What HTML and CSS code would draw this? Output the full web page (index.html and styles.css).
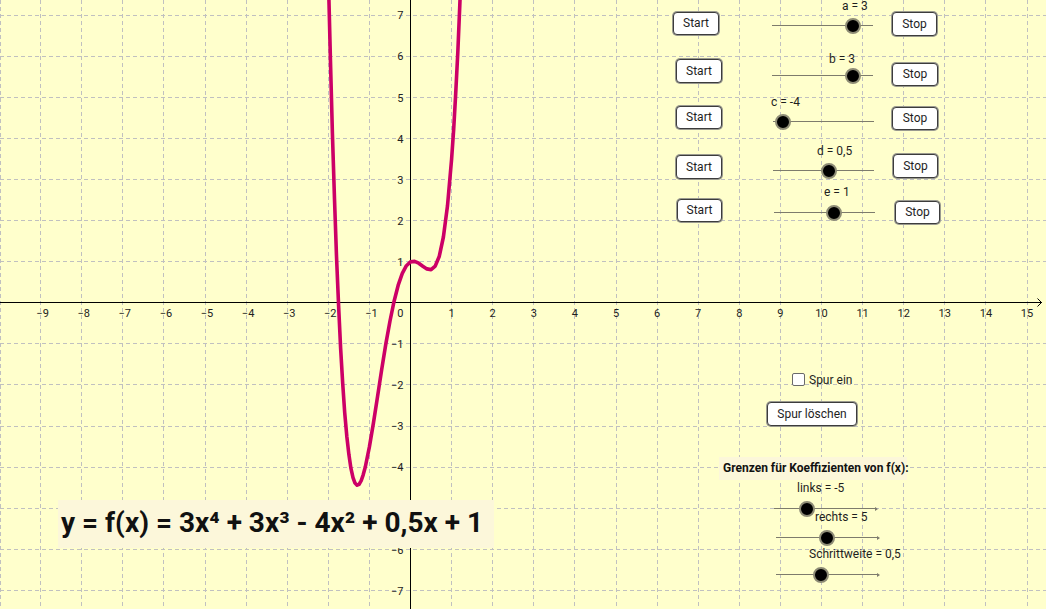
FILE: index.html
```html
<!DOCTYPE html>
<html lang="de">
<head>
<meta charset="utf-8">
<title>Funktion 4. Grades</title>
<link rel="stylesheet" href="styles.css">
</head>
<body>
<div class="applet">
  <svg class="graph" width="1046" height="609" viewBox="0 0 1046 609" xmlns="http://www.w3.org/2000/svg">
    <path class="grid" d="M0.5,0V609 M40.5,0V609 M81.5,0V609 M122.5,0V609 M163.5,0V609 M205.5,0V609 M246.5,0V609 M287.5,0V609 M328.5,0V609 M369.5,0V609 M451.5,0V609 M492.5,0V609 M533.5,0V609 M574.5,0V609 M616.5,0V609 M657.5,0V609 M698.5,0V609 M739.5,0V609 M780.5,0V609 M821.5,0V609 M862.5,0V609 M903.5,0V609 M944.5,0V609 M985.5,0V609 M1027.5,0V609"/>
    <path class="grid" d="M0,15.5H1046 M0,56.5H1046 M0,97.5H1046 M0,138.5H1046 M0,179.5H1046 M0,220.5H1046 M0,261.5H1046 M0,343.5H1046 M0,384.5H1046 M0,426.5H1046 M0,467.5H1046 M0,508.5H1046 M0,549.5H1046 M0,590.5H1046"/>
    <path class="axis" d="M0,302.5H1042 M410.5,0V609"/>
    <path class="axis" d="M1037.5,298.5L1041.5,302.5L1037.5,306.5"/>
    <g class="xl">
      <text x="42.6" y="317">−9</text>
      <text x="83.7" y="317">−8</text>
      <text x="124.8" y="317">−7</text>
      <text x="165.9" y="317">−6</text>
      <text x="207" y="317">−5</text>
      <text x="248.1" y="317">−4</text>
      <text x="289.2" y="317">−3</text>
      <text x="330.3" y="317">−2</text>
      <text x="371.4" y="317">−1</text>
      <text x="451.6" y="317">1</text>
      <text x="492.7" y="317">2</text>
      <text x="533.8" y="317">3</text>
      <text x="574.9" y="317">4</text>
      <text x="616" y="317">5</text>
      <text x="657.1" y="317">6</text>
      <text x="698.2" y="317">7</text>
      <text x="739.3" y="317">8</text>
      <text x="780.4" y="317">9</text>
      <text x="821.5" y="317">10</text>
      <text x="862.6" y="317">11</text>
      <text x="903.7" y="317">12</text>
      <text x="944.8" y="317">13</text>
      <text x="985.9" y="317">14</text>
      <text x="1027" y="317">15</text>
    </g>
    <g class="yl">
      <text x="403.5" y="317">0</text>
      <text x="403.5" y="19.3">7</text>
      <text x="403.5" y="60.4">6</text>
      <text x="403.5" y="101.5">5</text>
      <text x="403.5" y="142.6">4</text>
      <text x="403.5" y="183.7">3</text>
      <text x="403.5" y="224.8">2</text>
      <text x="403.5" y="265.9">1</text>
      <text x="403.5" y="348.1">−1</text>
      <text x="403.5" y="389.2">−2</text>
      <text x="403.5" y="430.3">−3</text>
      <text x="403.5" y="471.4">−4</text>
      <text x="403.5" y="553.6">−6</text>
      <text x="403.5" y="594.7">−7</text>
    </g>
    <polyline class="curve" transform="translate(0.5,0)" points="327.8,-25.8 329.9,58.6 331.9,133.3 334.0,199.0 336.0,256.3 338.1,305.7 340.1,347.9 342.2,383.4 344.2,412.6 346.3,436.2 348.4,454.6 350.4,468.2 352.5,477.6 354.5,483.1 356.6,485.2 358.6,484.3 360.7,480.7 362.7,474.8 364.8,467.0 368.9,446.9 373.0,422.6 377.1,396.2 381.2,369.5 385.3,344.1 389.5,321.0 393.6,301.2 397.7,285.2 401.8,273.4 405.9,265.7 410.0,261.9 414.1,261.4 418.2,263.2 422.3,266.2 426.4,268.9 430.6,269.6 434.7,266.1 438.8,256.2 442.9,237.0 447.0,205.8 451.1,159.1 453.2,129.0 455.2,93.6 457.3,52.5 459.3,5.2 461.4,-48.8"/>
  </svg>

  <div class="formula">y = f(x) = 3x⁴ + 3x³ - 4x² + 0,5x + 1</div>

  <button class="btn start1">Start</button>
  <button class="btn stop1">Stop</button>
  <button class="btn start2">Start</button>
  <button class="btn stop2">Stop</button>
  <button class="btn start3">Start</button>
  <button class="btn stop3">Stop</button>
  <button class="btn start4">Start</button>
  <button class="btn stop4">Stop</button>
  <button class="btn start5">Start</button>
  <button class="btn stop5">Stop</button>

  <span class="lbl la">a = 3</span>
  <div class="slider sa"><span class="knob" style="left:80%"></span></div>
  <span class="lbl lb">b = 3</span>
  <div class="slider sb"><span class="knob" style="left:80%"></span></div>
  <span class="lbl lc">c = -4</span>
  <div class="slider sc"><span class="knob" style="left:10%"></span></div>
  <span class="lbl ld">d = 0,5</span>
  <div class="slider sd"><span class="knob" style="left:55%"></span></div>
  <span class="lbl le">e = 1</span>
  <div class="slider se"><span class="knob" style="left:59%"></span></div>

  <label class="check"><span class="box"></span><span class="checktext">Spur ein</span></label>
  <button class="btn clear">Spur löschen</button>

  <div class="limits">Grenzen für Koeffizienten von f(x):</div>

  <span class="lbl llinks">links = -5</span>
  <div class="slider arrow slinks"><span class="knob" style="left:32%"></span></div>
  <span class="lbl lrechts">rechts = 5</span>
  <div class="slider arrow srechts"><span class="knob" style="left:50%"></span></div>
  <span class="lbl lschritt">Schrittweite = 0,5</span>
  <div class="slider arrow sschritt"><span class="knob" style="left:44%"></span></div>
</div>
</body>
</html>
```

FILE: styles.css
```css
html, body {
  margin: 0;
  padding: 0;
  background: #ffffcc;
}

.applet {
  position: relative;
  width: 1046px;
  height: 609px;
  overflow: hidden;
  background: #ffffcc;
  font-family: Roboto, "Liberation Sans", sans-serif;
  color: #1e1e1e;
}

.graph {
  display: block;
}

.grid {
  fill: none;
  stroke: #c0c0c0;
  stroke-width: 1;
  stroke-dasharray: 4 3;
}

.axis {
  fill: none;
  stroke: #000;
  stroke-width: 1;
}

.xl text,
.yl text {
  font-family: Roboto, "Liberation Sans", sans-serif;
  font-size: 11px;
  fill: #222;
}

.xl text {
  text-anchor: middle;
}

.yl text {
  text-anchor: end;
}

.curve {
  fill: none;
  stroke: #cc0066;
  stroke-width: 3.6;
  stroke-linejoin: round;
  stroke-linecap: round;
}

.formula {
  position: absolute;
  left: 58px;
  top: 500px;
  width: 436px;
  height: 48px;
  box-sizing: border-box;
  padding-left: 3px;
  background: #fcf7da;
  font-weight: 700;
  font-size: 28px;
  line-height: 46px;
  color: #111;
  white-space: nowrap;
}

/* buttons */
.btn {
  position: absolute;
  box-sizing: border-box;
  display: flex;
  align-items: center;
  justify-content: center;
  margin: 0;
  padding: 0 0 1px;
  width: 46px;
  height: 23px;
  background: #fff;
  border: 1px solid #3c3c3c;
  border-radius: 4px;
  box-shadow: 0 0 0 1px #9a9a90;
  font-family: Roboto, "Liberation Sans", sans-serif;
  font-size: 12px;
  color: #1e1e1e;
}

.start1 { left: 673px; top: 12px; }
.stop1  { left: 892px; top: 12px; width: 45px; height: 24px; }
.start2 { left: 676px; top: 59px; height: 24px; }
.stop2  { left: 892px; top: 63px; }
.start3 { left: 676px; top: 106px; }
.stop3  { left: 892px; top: 107px; }
.start4 { left: 676px; top: 155px; height: 24px; }
.stop4  { left: 893px; top: 154px; width: 45px; height: 24px; }
.start5 { left: 677px; top: 199px; width: 45px; }
.stop5  { left: 895px; top: 201px; width: 45px; }

.clear {
  left: 767px;
  top: 402px;
  width: 90px;
  height: 24px;
}

/* slider labels */
.lbl {
  position: absolute;
  font-size: 12px;
  line-height: 14px;
  white-space: nowrap;
  color: #1e1e1e;
}

.la { left: 842px; top: -1px; }
.lb { left: 829px; top: 52px; }
.lc { left: 771px; top: 95px; }
.ld { left: 817px; top: 144px; }
.le { left: 824px; top: 185px; }
.llinks { left: 797px; top: 481px; }
.lrechts { left: 815px; top: 510px; }
.lschritt { left: 809px; top: 547px; }

/* sliders */
.slider {
  position: absolute;
  width: 101px;
  height: 1px;
  background: #7d7b6c;
}

.slider.arrow {
  width: 102px;
}

.slider.arrow::after {
  content: "";
  position: absolute;
  right: -2px;
  top: -1.5px;
  border-left: 3px solid #7d7b6c;
  border-top: 2px solid transparent;
  border-bottom: 2px solid transparent;
}

.sa { left: 772px; top: 25px; }
.sb { left: 772px; top: 75px; }
.sc { left: 773px; top: 121px; }
.sd { left: 773px; top: 170px; }
.se { left: 774px; top: 212px; }
.slinks { left: 774px; top: 508px; }
.srechts { left: 776px; top: 537px; }
.sschritt { left: 776px; top: 574px; }

.knob {
  position: absolute;
  top: -7.5px;
  width: 12px;
  height: 12px;
  margin-left: -8px;
  border: 2px solid #8e8c76;
  border-radius: 50%;
  background: #000;
  z-index: 1;
}

/* checkbox */
.check {
  position: absolute;
  left: 792px;
  top: 372px;
  display: flex;
  align-items: center;
  gap: 4px;
  font-size: 12px;
  line-height: 14px;
}

.box {
  width: 13px;
  height: 13px;
  box-sizing: border-box;
  background: #fff;
  border: 1px solid #6a6a6a;
  border-radius: 2px;
}

.checktext {
  padding-top: 1px;
}

/* limits caption */
.limits {
  position: absolute;
  left: 719px;
  top: 457px;
  width: 188px;
  height: 23px;
  box-sizing: border-box;
  padding: 4px 0 0 4px;
  background: #fcf7da;
  font-weight: 700;
  font-size: 12px;
  line-height: 14px;
  white-space: nowrap;
  color: #111;
}
```
